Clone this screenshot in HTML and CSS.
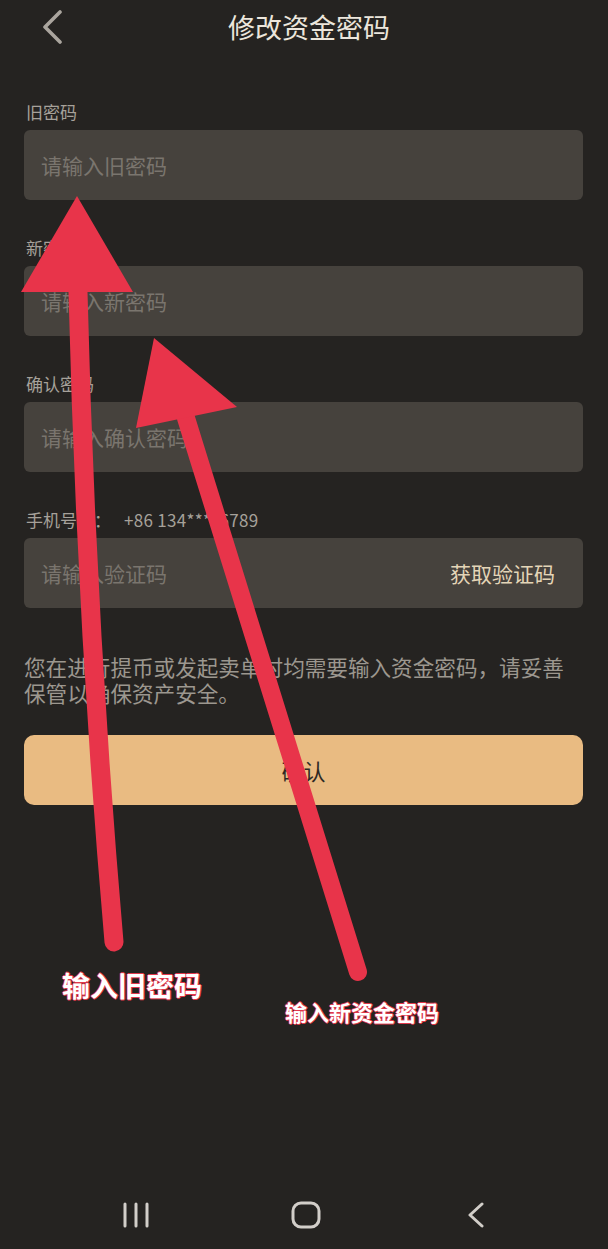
FILE: index.html
```html
<!DOCTYPE html>
<html lang="zh-CN">
<head>
<meta charset="utf-8">
<title>修改资金密码</title>
<link rel="stylesheet" href="styles.css">
</head>
<body>
<div class="page">
  <header class="header">
    <div class="back">
      <svg width="22" height="34" viewBox="0 0 22 34"><path d="M19 2 L4 17 L19 32" fill="none" stroke="#aaa59e" stroke-width="3.6" stroke-linecap="round" stroke-linejoin="round"/></svg>
    </div>
    <h1 class="title">修改资金密码</h1>
    <div></div>
  </header>

  <main class="form">
    <div class="field">
      <label class="field-label">旧密码</label>
      <div class="field-box"><input class="field-input" type="password" placeholder="请输入旧密码"></div>
    </div>
    <div class="field">
      <label class="field-label">新密码</label>
      <div class="field-box"><input class="field-input" type="password" placeholder="请输入新密码"></div>
    </div>
    <div class="field">
      <label class="field-label">确认密码</label>
      <div class="field-box"><input class="field-input" type="password" placeholder="请输入确认密码"></div>
    </div>
    <div class="field">
      <label class="field-label">手机号码：<span class="phone">+86 134****6789</span></label>
      <div class="field-box"><input class="field-input" type="text" placeholder="请输入验证码"><span class="get-code">获取验证码</span></div>
    </div>

    <p class="note">您在进行提币或发起卖单时均需要输入资金密码，请妥善保管以确保资产安全。</p>

    <button class="submit">确认</button>
  </main>

  <nav class="navbar">
    <span class="nav-item">
      <svg width="28" height="26" viewBox="0 0 28 26"><path d="M3 2 V24 M14 2 V24 M25 2 V24" stroke="#d2cec9" stroke-width="3" stroke-linecap="round"/></svg>
    </span>
    <span class="nav-item">
      <svg width="30" height="28" viewBox="0 0 30 28"><rect x="2" y="2" width="26" height="24" rx="8" fill="none" stroke="#d2cec9" stroke-width="3"/></svg>
    </span>
    <span class="nav-item">
      <svg width="20" height="26" viewBox="0 0 20 26"><path d="M16 2 L4 13 L16 24" fill="none" stroke="#d2cec9" stroke-width="3" stroke-linecap="round" stroke-linejoin="round"/></svg>
    </span>
  </nav>

  <div class="annotations">
    <svg class="arrows" width="608" height="1249" viewBox="0 0 608 1249">
      <path d="M78 292 Q86 620 114 942" fill="none" stroke="#e8344a" stroke-width="19" stroke-linecap="round"/>
      <polygon points="77,196 21,292 133,292" fill="#e8344a"/>
      <path d="M186 418 L358 972" fill="none" stroke="#e8344a" stroke-width="18" stroke-linecap="round"/>
      <polygon points="154,338 136,428 237,407" fill="#e8344a"/>
    </svg>
    <div class="tag tag-old">输入旧密码</div>
    <div class="tag tag-new">输入新资金密码</div>
  </div>
</div>
</body>
</html>
```

FILE: styles.css
```css
* { box-sizing: border-box; }
html, body {
  margin: 0;
  padding: 0;
  background: #252321;
}
body {
  font-family: "Noto Sans CJK SC", "Noto Sans", sans-serif;
}
.page {
  position: relative;
  width: 608px;
  min-height: 1249px;
  display: flex;
  flex-direction: column;
  background: #252321;
  overflow: hidden;
}
.header {
  height: 54px;
  display: grid;
  grid-template-columns: 1fr auto 1fr;
  align-items: center;
  padding: 0 14px 0 24px;
}
.back {
  display: flex;
  align-items: center;
  padding-left: 17px;
}
.back svg { display: block; }
.title {
  margin: 0;
  font-size: 27px;
  font-weight: 400;
  color: #ece6dc;
  line-height: 30px;
}
.form {
  padding: 48px 25px 0 24px;
  display: flex;
  flex-direction: column;
}
.field {
  display: flex;
  flex-direction: column;
  gap: 8px;
  margin-bottom: 38px;
}
.field:last-of-type { margin-bottom: 0; }
.field-label {
  font-size: 17px;
  line-height: 20px;
  color: #a6a19a;
  padding-left: 2px;
}
.phone {
  margin-left: 13px;
  letter-spacing: 0.3px;
}
.field-box {
  height: 70px;
  background: #46423d;
  border-radius: 6px;
  display: flex;
  align-items: center;
  padding: 0 28px 0 17px;
}
.field-input {
  flex: 1;
  min-width: 0;
  border: none;
  outline: none;
  background: transparent;
  font-family: "Noto Sans CJK SC", "Noto Sans", sans-serif;
  font-size: 21px;
  color: #ddd;
  padding: 0;
}
.field-input::placeholder {
  color: #7a756e;
}
.get-code {
  font-size: 21px;
  color: #e4d5b7;
}
.note {
  margin: 46px 0 0 0;
  font-size: 21.6px;
  line-height: 26px;
  color: #9c978f;
}
.submit {
  margin-top: 29px;
  height: 70px;
  border: none;
  border-radius: 10px;
  background: #e9bb82;
  color: #2e2924;
  font-family: "Noto Sans CJK SC", "Noto Sans", sans-serif;
  font-size: 22px;
  padding: 0;
}
.navbar {
  margin-top: auto;
  height: 69px;
  display: flex;
  justify-content: center;
  align-items: center;
  gap: 130px;
  padding-left: 4px;
}
.nav-item {
  width: 40px;
  display: flex;
  justify-content: center;
}
.nav-item svg { display: block; }
.annotations {
  position: absolute;
  inset: 0;
  pointer-events: none;
}
.arrows {
  position: absolute;
  left: 0;
  top: 0;
}
.tag {
  position: absolute;
  color: #ffffff;
  font-weight: 700;
  white-space: nowrap;
  text-shadow: 1px 0 #e0384c, -1px 0 #e0384c, 0 1px #e0384c, 0 -1px #e0384c;
}
.tag-old {
  left: 62px;
  top: 970px;
  font-size: 28px;
  line-height: 30px;
}
.tag-new {
  left: 285px;
  top: 999px;
  font-size: 22px;
  line-height: 24px;
}
```
